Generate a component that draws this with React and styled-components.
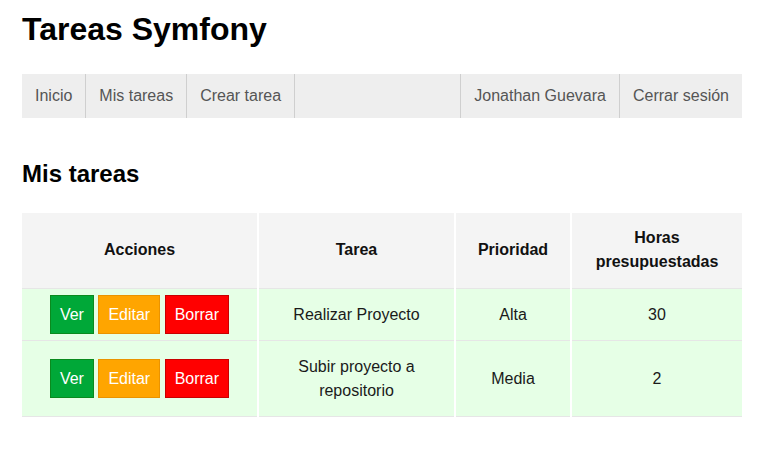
import React from "react";
import styled, { createGlobalStyle } from "styled-components";

const Global = createGlobalStyle`
	body {
		margin: 0;
		background: #fff;
		font-family: "Liberation Sans", Arial, sans-serif;
		color: #111;
	}
`;

const Page = styled.div`
	width: 720px;
	margin-left: 22px;
	padding-top: 11px;
`;

const Title = styled.h1`
	margin: 0;
	font-size: 32px;
	line-height: 36px;
	font-weight: bold;
	color: #000;
`;

const Nav = styled.nav`
	margin-top: 27px;
	height: 44px;
	background: #eee;
	display: flex;
	justify-content: space-between;
`;

const NavGroup = styled.div`
	display: flex;
`;

const NavLink = styled.a`
	display: block;
	padding: 0 13px;
	line-height: 44px;
	font-size: 16px;
	color: #555;
	text-decoration: none;
	border-${props => (props.right ? "left" : "right")}: 1px solid #cfcfcf;
`;

const Subtitle = styled.h2`
	margin: 42px 0 0;
	font-size: 24px;
	line-height: 28px;
	font-weight: bold;
	color: #000;
`;

const Table = styled.table`
	margin-top: 25px;
	width: 720px;
	border-collapse: collapse;
	table-layout: fixed;
	font-size: 16px;
	line-height: 24px;
`;

const Th = styled.th`
	background: #f4f4f4;
	padding: 13px 8px 14px;
	font-weight: bold;
	text-align: center;
	border-right: 2px solid #fff;
	border-bottom: 1px solid #e6e6e6;
	&:last-child { border-right: none; }
`;

const Td = styled.td`
	background: #e6ffe6;
	padding: 14px 8px 13px;
	text-align: center;
	color: #1a1a1a;
	border-right: 2px solid #fff;
	border-bottom: 1px solid #e6e6e6;
	&:last-child { border-right: none; }
`;

const colors = {
	green: ["#00a838", "#0a8a1e"],
	orange: ["#ffa500", "#ea9300"],
	red: ["#ff0000", "#c80000"],
};

const Button = styled.a`
	padding: 10px 9px;
	color: #fff;
	text-decoration: none;
	background: ${props => colors[props.color][0]};
	border: 1px solid ${props => colors[props.color][1]};
`;

const tasks = [
	{ name: "Realizar Proyecto", priority: "Alta", hours: 30 },
	{ name: "Subir proyecto a repositorio", priority: "Media", hours: 2 },
];

export default function App() {
	return (
		<Page>
			<Global />
			<Title>Tareas Symfony</Title>
			<Nav>
				<NavGroup>
					<NavLink href="#">Inicio</NavLink>
					<NavLink href="#">Mis tareas</NavLink>
					<NavLink href="#">Crear tarea</NavLink>
				</NavGroup>
				<NavGroup>
					<NavLink right href="#">Jonathan Guevara</NavLink>
					<NavLink right href="#">Cerrar sesión</NavLink>
				</NavGroup>
			</Nav>
			<Subtitle>Mis tareas</Subtitle>
			<Table>
				<colgroup>
					<col style={{ width: 236 }} />
					<col style={{ width: 197 }} />
					<col style={{ width: 116 }} />
					<col style={{ width: 171 }} />
				</colgroup>
				<thead>
					<tr>
						<Th>Acciones</Th>
						<Th>Tarea</Th>
						<Th>Prioridad</Th>
						<Th>Horas presupuestadas</Th>
					</tr>
				</thead>
				<tbody>
					{tasks.map(t => (
						<tr key={t.name}>
							<Td>
								<Button color="green" href="#">Ver</Button>{" "}
								<Button color="orange" href="#">Editar</Button>{" "}
								<Button color="red" href="#">Borrar</Button>
							</Td>
							<Td>{t.name}</Td>
							<Td>{t.priority}</Td>
							<Td>{t.hours}</Td>
						</tr>
					))}
				</tbody>
			</Table>
		</Page>
	);
}
